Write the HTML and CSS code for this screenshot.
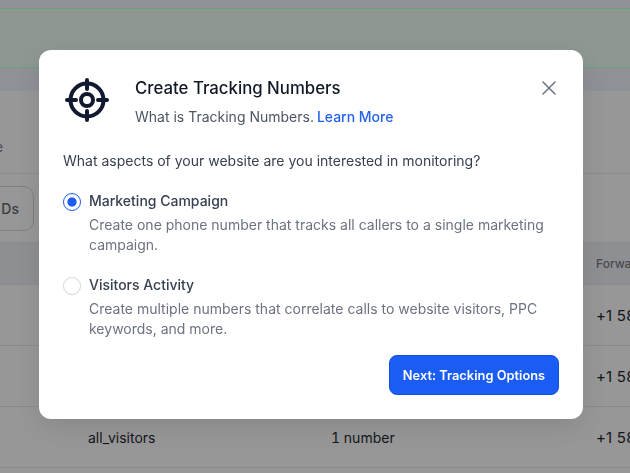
FILE: index.html
```html
<!DOCTYPE html>
<html lang="en">
<head>
<meta charset="utf-8">
<title>Create Tracking Numbers</title>
<link rel="stylesheet" href="styles.css">
</head>
<body>
<div class="page">
  <div class="top-gap"></div>
  <div class="banner"></div>
  <div class="strip"></div>
  <div class="content">
    <div class="crumb-row"><span class="crumb">e</span></div>
    <div class="tool-row"><span class="tool-btn">Ds</span></div>
    <div class="thead"><span class="th-forward">Forwa</span></div>
    <div class="row"><span class="c-phone">+1 58</span></div>
    <div class="row"><span class="c-phone">+1 58</span></div>
    <div class="row"><span class="c-name">all_visitors</span><span class="c-num">1 number</span><span class="c-phone">+1 58</span></div>
  </div>
</div>
<section class="modal">
  <header class="modal-head">
    <svg class="target" viewBox="0 0 44 44" width="44" height="44" aria-hidden="true">
      <circle cx="22" cy="22" r="16.5" fill="none" stroke="#111a2e" stroke-width="4"/>
      <circle cx="22" cy="22" r="6" fill="none" stroke="#111a2e" stroke-width="4"/>
      <path d="M22 2v9M22 33v9M2 22h9M33 22h9" fill="none" stroke="#111a2e" stroke-width="4" stroke-linecap="round"/>
    </svg>
    <div class="head-text">
      <h1>Create Tracking Numbers</h1>
      <p>What is Tracking Numbers. <a href="#">Learn More</a></p>
    </div>
    <svg class="close" viewBox="0 0 14 14" width="14" height="14" aria-hidden="true">
      <path d="M1 1l12 12M13 1L1 13" fill="none" stroke="#6b7280" stroke-width="1.5" stroke-linecap="round"/>
    </svg>
  </header>
  <p class="question">What aspects of your website are you interested in monitoring?</p>
  <div class="options">
    <div class="option">
      <span class="radio radio-on"></span>
      <div>
        <div class="opt-title">Marketing Campaign</div>
        <div class="opt-desc">Create one phone number that tracks all callers to a single marketing campaign.</div>
      </div>
    </div>
    <div class="option">
      <span class="radio"></span>
      <div>
        <div class="opt-title">Visitors Activity</div>
        <div class="opt-desc">Create multiple numbers that correlate calls to website visitors, PPC keywords, and more.</div>
      </div>
    </div>
  </div>
  <footer class="modal-foot"><button class="next" type="button">Next: Tracking Options</button></footer>
</section>
</body>
</html>
```
FILE: styles.css
```css
* { box-sizing: border-box; }
html, body { margin: 0; height: 100%; }
body { overflow: hidden; font-family: Inter, "Liberation Sans", sans-serif; background: #979797; }
.page { height: 473px; display: flex; flex-direction: column; overflow: hidden; }
.top-gap { height: 8px; background: #8e9196; }
.banner { height: 60px; background: #8e9791; border-top: 1px solid #65a578; border-bottom: 1px solid #65a578; }
.strip { height: 23px; background: #8e9196; }
.content { flex: 1; background: #979797; }
.crumb-row { height: 83px; padding-top: 47px; border-bottom: 1px solid #8c8c8e; font-size: 14px; color: #4a4c50; line-height: 17px; }
.crumb { margin-left: -5px; display: inline-block; }
.tool-row { height: 68px; padding-top: 12px; }
.tool-btn { width: 64px; height: 45px; margin-left: -30px; border: 1px solid #7f8083; border-radius: 10px; font-size: 14px; font-weight: 500; color: #3a3d42; display: flex; align-items: center; justify-content: flex-end; padding-right: 14px; }
.thead { height: 43px; background: #8e8f92; border-top: 1px solid #8a8b8d; border-bottom: 1px solid #8a8b8d; display: flex; align-items: center; justify-content: flex-end; font-size: 12px; color: #47494e; font-weight: 500; white-space: nowrap; overflow: hidden; }
.th-forward { width: 34px; }
.row { height: 61px; border-bottom: 1px solid #8b8b8e; display: flex; align-items: center; font-size: 14px; color: #14161c; }
.c-name { margin-left: 88px; width: 243px; }
.c-num { flex: 1; font-variant-numeric: tabular-nums; }
.c-phone { width: 34px; margin-left: auto; white-space: nowrap; overflow: hidden; font-size: 15px; letter-spacing: .2px; }
.modal { position: fixed; left: 39px; top: 50px; width: 544px; height: 369px; background: #fff; border-radius: 12px; padding: 24px; box-shadow: 0 8px 24px rgba(0,0,0,.1); display: flex; flex-direction: column; }
.modal-head { display: flex; align-items: flex-start; }
.target { flex: none; margin: 4px 0 0 2px; }
.head-text { flex: 1; margin-left: 26px; }
h1 { margin: 2px 0 0; font-size: 16.8px; line-height: 24px; font-weight: 500; color: #111827; }
.head-text p { margin: 7px 0 0; font-size: 14px; line-height: 20px; color: #4b5563; }
.head-text a { margin-left: -1px; color: #2563eb; font-weight: 500; text-decoration: none; }
.close { flex: none; margin: 7px 3px 0 0; }
.question { margin: 24px 0 0; font-size: 14px; line-height: 20px; color: #374151; }
.options { margin-top: 20px; display: flex; flex-direction: column; gap: 20px; }
.option { display: flex; align-items: flex-start; gap: 8px; }
.radio { flex: none; width: 18px; height: 18px; margin-top: 2px; border-radius: 50%; border: 1px solid #d1d5db; background: #fff; }
.radio-on { border-color: #1a5cf4; border-width: 1.5px; background: radial-gradient(circle, #1a5cf4 0 4.2px, #fff 5px); }
.opt-title { font-size: 14px; line-height: 20px; font-weight: 500; color: #374151; }
.opt-desc { margin-top: 4px; font-size: 14px; line-height: 20px; color: #6b7280; }
.modal-foot { margin-top: auto; display: flex; justify-content: flex-end; }
.next { height: 40px; width: 170px; border: 1px solid #0f52e0; border-radius: 8px; background: #1a5cf4; color: #fff; font: 600 12.85px Inter, "Liberation Sans", sans-serif; padding: 0; }
```
